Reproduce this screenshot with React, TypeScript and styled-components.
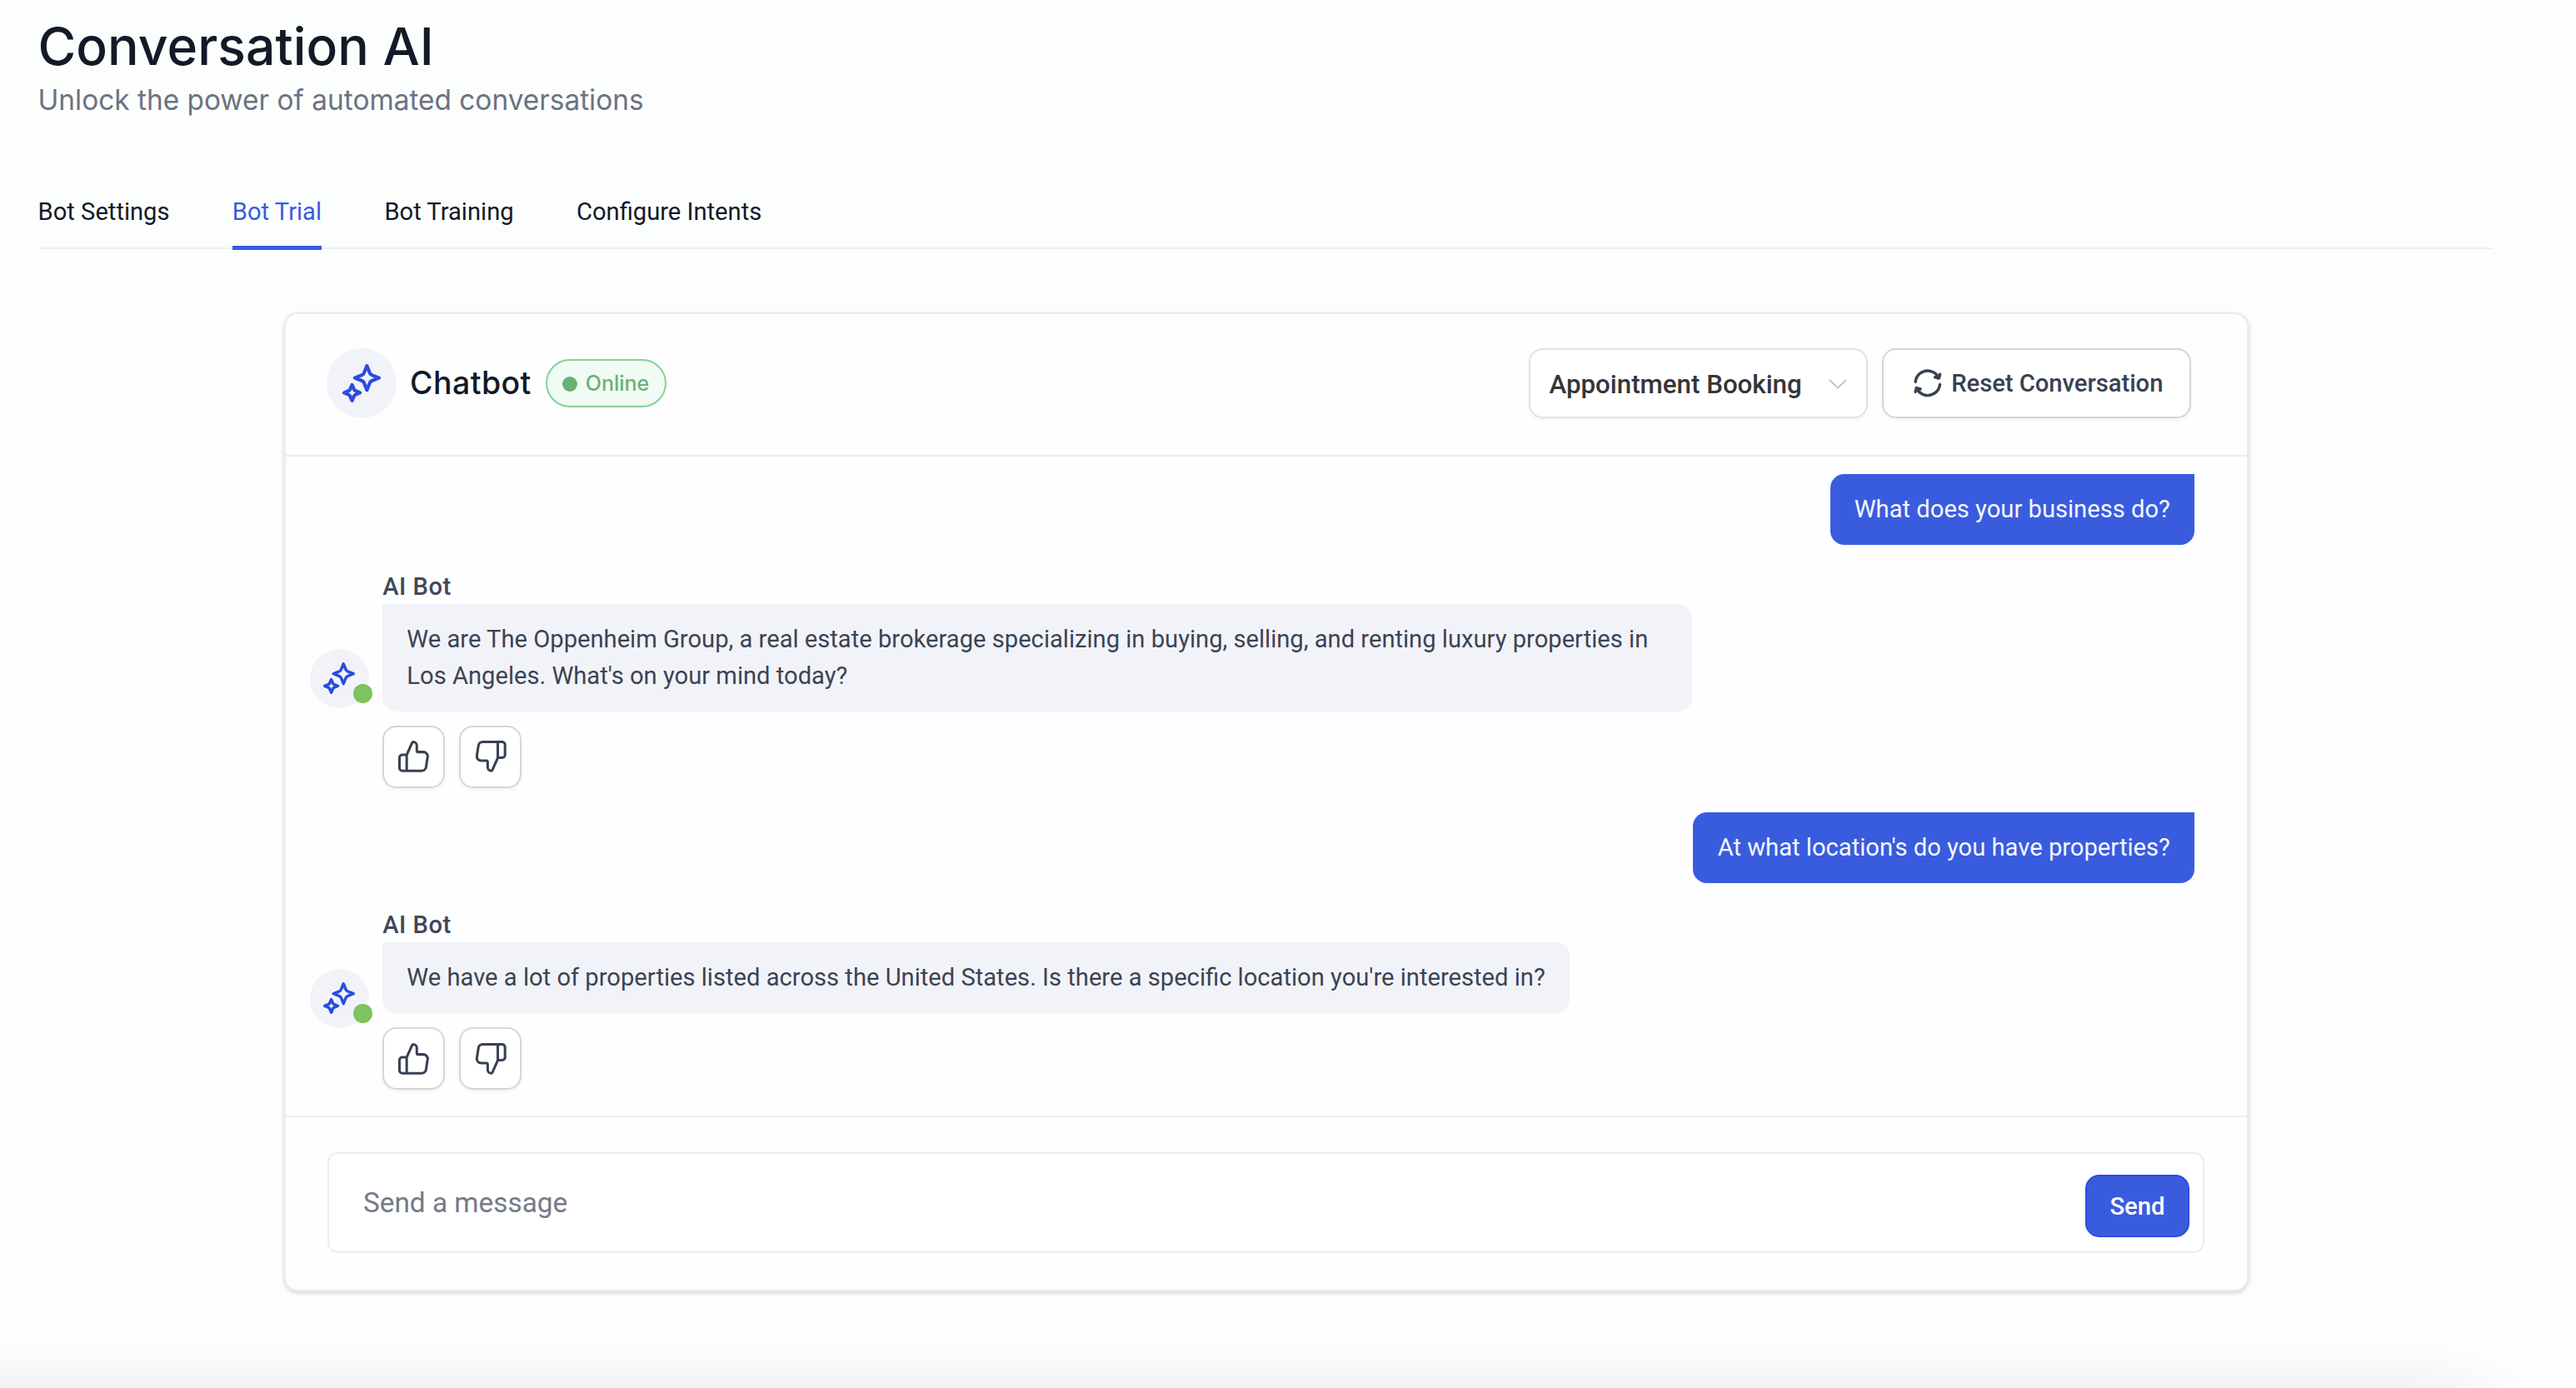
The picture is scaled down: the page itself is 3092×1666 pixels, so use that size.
import React from 'react';
import styled, { createGlobalStyle, css } from 'styled-components';

const roboto = `Roboto, 'Liberation Sans', sans-serif`;
const inter = `Inter, 'Liberation Sans', sans-serif`;

const GlobalStyle = createGlobalStyle`
  *, *::before, *::after { box-sizing: border-box; }
  body { margin: 0; background: #fcfefd; font-family: ${roboto}; }
  button, input { font: inherit; margin: 0; }
`;

const Page = styled.div`
  height: 1666px;
  padding: 17px 99px 0 45.5px;
  overflow: hidden;
  position: relative;
  background: #fcfefd;
`;

const Title = styled.h1`
  margin: 0;
  font: 500 62.5px/76px ${inter};
  color: #131927;
`;

const Subtitle = styled.p`
  margin: 2px 0 0;
  font: 400 33.4px/50px ${inter};
  color: #6c7282;
`;

const Tabs = styled.nav`
  display: flex;
  gap: 75.3px;
  margin-top: 93px;
  height: 61px;
  border-bottom: 2px solid #eeeff4;
`;

const Tab = styled.a<{ $active?: boolean }>`
  height: 62px;
  font-size: 29.17px;
  line-height: 32px;
  white-space: nowrap;
  color: ${p => (p.$active ? '#395cde' : '#131927')};
  ${p => p.$active && css`border-bottom: 5px solid #395cde;`}
`;

const Card = styled.section`
  display: flex;
  flex-direction: column;
  width: 2358px;
  height: 1175px;
  margin: 76px 0 0 295.5px;
  border: 2px solid #ebecf1;
  border-radius: 17px;
  background: #fefefe;
  box-shadow: 0 2px 4px rgba(16, 24, 40, 0.1), 0 2px 6px rgba(16, 24, 40, 0.08);
`;

const CardHeader = styled.header`
  display: flex;
  align-items: center;
  flex: none;
  height: 171px;
  padding: 0 67px 4px 49.4px;
  border-bottom: 2px solid #ebecef;
`;

const AvatarCircle = styled.div<{ $size: number }>`
  position: relative;
  display: flex;
  align-items: center;
  justify-content: center;
  flex: none;
  width: ${p => p.$size}px;
  height: ${p => p.$size}px;
  border-radius: 50%;
  background: #f2f3f8;
`;

const Presence = styled.span`
  position: absolute;
  right: -4px;
  bottom: 6px;
  width: 23px;
  height: 23px;
  border-radius: 50%;
  background: #7ec35f;
`;

const BotName = styled.h2`
  margin: 0 17px 0 15.7px;
  font: 500 37.5px/50px ${inter};
  letter-spacing: 0.42px;
  color: #131927;
`;

const Badge = styled.span`
  display: inline-flex;
  align-items: center;
  gap: 9.5px;
  height: 58px;
  padding: 0 18.5px;
  border: 2px solid #86d394;
  border-radius: 29px;
  background: #f0fbf4;
  font: 500 25px/36px ${inter};
  color: #6bb074;
`;

const BadgeDot = styled.i`
  width: 18px;
  height: 18px;
  margin-top: 3px;
  border-radius: 50%;
  background: #6bb074;
`;

const Controls = styled.div`
  display: flex;
  gap: 17px;
  margin-left: auto;
`;

const Select = styled.button`
  display: flex;
  align-items: center;
  justify-content: space-between;
  width: 407px;
  height: 84px;
  padding: 3px 23.5px 0 22.5px;
  border: 2px solid #e1e2e7;
  border-radius: 16.7px;
  background: #fff;
  box-shadow: 0 2px 4px rgba(16, 24, 40, 0.05);
  font-weight: 500;
  font-size: 31.25px;
  color: #333639;
`;

const ResetButton = styled.button`
  display: flex;
  align-items: center;
  gap: 7.5px;
  height: 84px;
  padding: 0 31.6px 0 32px;
  border: 2px solid #d3d6dd;
  border-radius: 16.7px;
  background: #fff;
  box-shadow: 0 2px 4px rgba(16, 24, 40, 0.05);
  font-weight: 500;
  font-size: 29.17px;
  color: #374151;
`;

const Messages = styled.div`
  display: flex;
  flex-direction: column;
  flex: 1;
  gap: 29.1px;
  padding: 20.5px 63px 0 28.7px;
`;

const bubble = css`
  padding: 21.3px 29.17px 20.2px;
  font-size: 29.17px;
  line-height: 43.75px;
`;

const UserBubble = styled.div`
  ${bubble}
  align-self: flex-end;
  border-radius: 16.7px 0 16.7px 16.7px;
  background: #395cde;
  color: #f5f7ff;
`;

const BotRow = styled.div`
  display: flex;
  align-items: center;
  gap: 16.5px;
`;

const BotContent = styled.div`
  display: flex;
  flex-direction: column;
  align-items: flex-start;
`;

const BotLabel = styled.div`
  font-weight: 500;
  font-size: 29.17px;
  line-height: 42px;
  letter-spacing: 0.5px;
  color: #404858;
`;

const BotBubble = styled.div`
  ${bubble}
  max-width: 1571.5px;
  border-radius: 0 16.7px 16.7px 16.7px;
  background: #f2f3f8;
  color: #3b4354;
`;

const Feedback = styled.div`
  display: flex;
  gap: 16.7px;
  margin-top: 16.7px;
`;

const IconButton = styled.button`
  display: flex;
  align-items: center;
  justify-content: center;
  width: 75px;
  height: 75px;
  padding: 0;
  border: 2px solid #d3d6dd;
  border-radius: 16.7px;
  background: #fff;
  box-shadow: 0 2px 4px rgba(16, 24, 40, 0.05);
  color: #374151;
`;

const Footer = styled.footer`
  flex: none;
  height: 209px;
  padding: 42px 51px 0 50px;
  border-top: 2px solid #eeeff4;
`;

const Composer = styled.form`
  display: flex;
  align-items: center;
  height: 121px;
  padding: 0 16px 0 41px;
  border: 2px solid #ebebf1;
  border-radius: 12.5px;
  background: #fff;
`;

const MessageInput = styled.input`
  flex: 1;
  min-width: 0;
  height: 60px;
  padding: 0;
  border: 0;
  outline: 0;
  background: transparent;
  font-size: 33.33px;
  color: #131927;
  &::placeholder { color: #747a88; opacity: 1; }
`;

const SendButton = styled.button`
  width: 125px;
  height: 75px;
  margin-top: 8px;
  padding: 0;
  border: 2px solid #2a4bdc;
  border-radius: 16.7px;
  background: #395cde;
  box-shadow: 0 2px 4px rgba(16, 24, 40, 0.05);
  font-weight: 500;
  font-size: 29.3px;
  color: #fff;
`;

const BottomShade = styled.div`
  position: absolute;
  left: -200px;
  right: 117px;
  top: 1690px;
  height: 300px;
  border-radius: 16px;
  box-shadow: 0 0 78px rgba(20, 30, 25, 0.19);
`;

const star = (tip: number, a: number, b: number, c: number) =>
  `M0 ${-tip}L${b} ${-a}Q${c} ${-c} ${a} ${-b}L${tip} 0L${a} ${b}Q${c} ${c} ${b} ${a}` +
  `L0 ${tip}L${-b} ${a}Q${-c} ${c} ${-a} ${b}L${-tip} 0L${-a} ${-b}Q${-c} ${-c} ${-b} ${-a}Z`;

const Sparkles = ({ size }: { size: number }) => (
  <svg width={size} height={size} viewBox="0 0 46 46" fill="none" stroke="#2b4cde" strokeWidth="4.2" strokeLinejoin="round">
    <path transform="translate(29.4 16.6)" d={star(14.5, 6.6, 3.2, 4)} />
    <path transform="translate(11.6 34.4)" d={star(9.5, 4.4, 2.2, 2.8)} />
  </svg>
);

const ThumbIcon = ({ down }: { down?: boolean }) => (
  <svg width="41.67" height="41.67" viewBox="0 0 24 24" fill="none" stroke="currentColor" strokeWidth="1.75" strokeLinecap="round" strokeLinejoin="round">
    <path
      transform={down ? 'rotate(180 12 12)' : undefined}
      d="M7 22V11M2 13V20C2 21.1046 2.89543 22 4 22H17.4262C18.907 22 20.1662 20.9197 20.3914 19.4562L21.4683 12.4562C21.7479 10.6389 20.3418 9 18.5032 9H15C14.4477 9 14 8.55228 14 8V4.46584C14 3.10399 12.896 2 11.5342 2C11.2093 2 10.915 2.1913 10.7831 2.48812L7.26394 10.4061C7.10344 10.7673 6.74532 11 6.35013 11H4C2.89543 11 2 11.8954 2 13Z"
    />
  </svg>
);

const RefreshIcon = () => (
  <svg width="41.67" height="41.67" viewBox="0 0 24 24" fill="none" stroke="currentColor" strokeWidth="2" strokeLinecap="round" strokeLinejoin="round">
    <path d="M20.4534 12.8932C20.1752 15.5031 18.6964 17.9488 16.2494 19.3616C12.1839 21.7088 6.98539 20.3158 4.63818 16.2503L4.38818 15.8173M3.54613 11.1066C3.82425 8.49667 5.30307 6.05104 7.75 4.63831C11.8155 2.2911 17.014 3.68404 19.3612 7.74954L19.6112 8.18255M3.49316 18.0661L4.22521 15.334L6.95727 16.0661M17.0424 7.93364L19.7744 8.66569L20.5065 5.93364" />
  </svg>
);

const ChevronIcon = () => (
  <svg width="22" height="12" viewBox="0 0 22 12" fill="none" stroke="#c3c4c8" strokeWidth="2">
    <path d="M1 1L11 10.5L21 1" />
  </svg>
);

const BotMessage = ({ text }: { text: string }) => (
  <BotRow>
    <AvatarCircle $size={71}>
      <Sparkles size={38} />
      <Presence />
    </AvatarCircle>
    <BotContent>
      <BotLabel>AI Bot</BotLabel>
      <BotBubble>{text}</BotBubble>
      <Feedback>
        <IconButton aria-label="Good answer"><ThumbIcon /></IconButton>
        <IconButton aria-label="Bad answer"><ThumbIcon down /></IconButton>
      </Feedback>
    </BotContent>
  </BotRow>
);

const tabs = ['Bot Settings', 'Bot Trial', 'Bot Training', 'Configure Intents'];

export default function App() {
  return (
    <Page>
      <GlobalStyle />
      <Title>Conversation AI</Title>
      <Subtitle>Unlock the power of automated conversations</Subtitle>
      <Tabs>
        {tabs.map(t => <Tab key={t} $active={t === 'Bot Trial'}>{t}</Tab>)}
      </Tabs>
      <Card>
        <CardHeader>
          <AvatarCircle $size={84}><Sparkles size={46} /></AvatarCircle>
          <BotName>Chatbot</BotName>
          <Badge><BadgeDot />Online</Badge>
          <Controls>
            <Select>Appointment Booking<ChevronIcon /></Select>
            <ResetButton><RefreshIcon />Reset Conversation</ResetButton>
          </Controls>
        </CardHeader>
        <Messages>
          <UserBubble>What does your business do?</UserBubble>
          <BotMessage text="We are The Oppenheim Group, a real estate brokerage specializing in buying, selling, and renting luxury properties in Los Angeles. What's on your mind today?" />
          <UserBubble>At what location's do you have properties?</UserBubble>
          <BotMessage text="We have a lot of properties listed across the United States. Is there a specific location you're interested in?" />
        </Messages>
        <Footer>
          <Composer onSubmit={e => e.preventDefault()}>
            <MessageInput placeholder="Send a message" />
            <SendButton>Send</SendButton>
          </Composer>
        </Footer>
      </Card>
      <BottomShade />
    </Page>
  );
}
